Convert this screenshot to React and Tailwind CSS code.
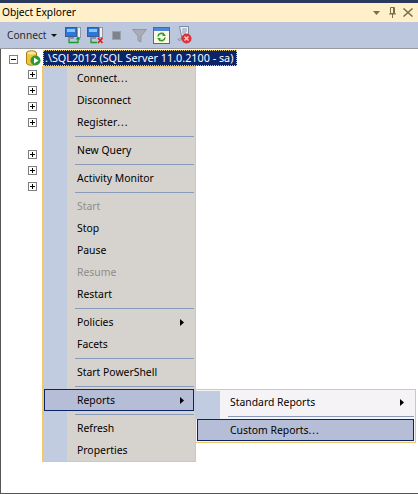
function Plus() {
  return (
    <div className="w-[9px] h-[9px] border border-[#808080] bg-white relative">
      <div className="absolute left-[1px] top-[3px] w-[5px] h-[1px] bg-black" />
      <div className="absolute left-[3px] top-[1px] w-[1px] h-[5px] bg-black" />
    </div>
  );
}
function Minus() {
  return (
    <div className="w-[9px] h-[9px] mt-[5px] border border-[#808080] bg-white relative shrink-0">
      <div className="absolute left-[1px] top-[3px] w-[5px] h-[1px] bg-black" />
    </div>
  );
}
function Arrow() {
  return <svg width="4" height="7" viewBox="0 0 4 7"><path d="M0 0 L4 3.5 L0 7Z" fill="#000" /></svg>;
}
function Label({ text }) {
  const dots = text.endsWith("...");
  return (
    <span className="pt-[1px]">
      {dots ? text.slice(0, -3) : text}
      {dots ? <span className="tracking-[1px]">...</span> : null}
    </span>
  );
}
function Item({ label, arrow, disabled }) {
  return (
    <div className="h-[22px] flex items-center">
      <div className="w-[24px] h-full bg-[#c1cce1] shrink-0" />
      <div className={"flex-1 h-full flex items-center pl-[10px] pr-[11px] justify-between " + (disabled ? "text-[#8d8d8d]" : "text-black")}>
        <Label text={label} />
        {arrow ? <Arrow /> : null}
      </div>
    </div>
  );
}
function Sep() {
  return (
    <div className="h-[6px] flex">
      <div className="w-[24px] h-full bg-[#c1cce1] shrink-0" />
      <div className="flex-1 pl-[8px] pr-[1px] flex items-center"><div className="w-full h-[1px] bg-[#8a9ab9]" /></div>
    </div>
  );
}
function Computer({ children }) {
  return (
    <svg width="17" height="17" viewBox="0 0 17 17">
      <rect x="0.5" y="0.5" width="11" height="9" fill="#2a78dc" stroke="#3a5c94" />
      <rect x="2" y="2" width="8" height="3" fill="#8cc4f6" />
      <rect x="3" y="10" width="6" height="2" fill="#8a93a6" />
      <rect x="12.5" y="0.5" width="3" height="10" fill="#eceff5" stroke="#9098a8" />
      {children}
    </svg>
  );
}
function Toolbar() {
  return (
    <div className="h-[26px] bg-[#bcc7dd] flex items-center pl-[7px] shrink-0">
      <span className="text-[#2a2a2a] text-[10.2px] pt-[1px]">Connect</span>
      <svg className="ml-[4px]" width="6" height="3" viewBox="0 0 6 3"><path d="M0 0H6L3 3Z" fill="#111" /></svg>
      <div className="ml-[8px] flex"><Computer>
        <path d="M4 12V15.5H13V12" stroke="#1c9a2a" strokeWidth="1.3" fill="none" />
        <path d="M13 9.5L15.5 12.5H10.5Z" fill="#1c9a2a" />
      </Computer></div>
      <div className="ml-[5px] flex"><Computer>
        <path d="M4 12V15.5H10" stroke="#1c9a2a" strokeWidth="1.3" fill="none" />
        <path d="M11 11L15.5 16M15.5 11L11 16" stroke="#e01a1a" strokeWidth="1.7" />
      </Computer></div>
      <div className="ml-[8px] w-[9px] h-[9px] bg-[#7f838c] border border-[#9ca1ae]" />
      <svg className="ml-[11px]" width="15" height="15" viewBox="0 0 15 15">
        <path d="M0.5 1.5H14.5L9 8V14L6 12.5V8Z" fill="#a8acb4" stroke="#9296a0" />
      </svg>
      <svg className="ml-[6px]" width="17" height="17" viewBox="0 0 17 17">
        <rect x="0.5" y="0.5" width="16" height="16" fill="#fbf8e4" stroke="#3d6bb5" />
        <rect x="1" y="1" width="15" height="3" fill="#4f86d8" />
        <path d="M5 9.5A3.5 3.5 0 0 1 11 7.5M12 10.5A3.5 3.5 0 0 1 6 12.5" stroke="#2f9c2a" strokeWidth="1.6" fill="none" />
        <path d="M10 5.5L13 9H9.5Z M7 14.5L4 11H7.5Z" fill="#2f9c2a" />
      </svg>
      <svg className="ml-[7px]" width="15" height="18" viewBox="0 0 15 18">
        <path d="M2.5 0.5H11.5V10H4.5Z" fill="#eef1f6" stroke="#7d8aa3" />
        <path d="M4.5 10V13C4 15 1 15 1 13H4" stroke="#7d8aa3" fill="#eef1f6" />
        <path d="M5 3H10M5 5H10M5 7H9" stroke="#8797b5" />
        <circle cx="9.5" cy="12.5" r="5" fill="#d8343a" />
        <path d="M7.5 10.5L11.5 14.5M11.5 10.5L7.5 14.5" stroke="#f7d8d8" strokeWidth="1.4" />
      </svg>
    </div>
  );
}
export default function App() {
  const items = [
    ["Connect..."], ["Disconnect"], ["Register..."], 0, ["New Query"], 0, ["Activity Monitor"], 0,
    ["Start", false, true], ["Stop"], ["Pause"], ["Resume", false, true], ["Restart"], 0,
    ["Policies", true], ["Facets"], 0, ["Start PowerShell"], 0,
  ];
  return (
    <div className="w-[418px] h-[494px] bg-[#2b3a5a] pt-[3px] flex flex-col text-[10.4px] relative overflow-hidden" style={{ fontFamily: '"Noto Sans", sans-serif' }}>
      <div className="h-[19px] bg-[#fff0c9] flex items-center justify-between pl-[2px] pr-[5px] shrink-0">
        <span className="text-black text-[10.2px] pt-[1px]">Object Explorer</span>
        <div className="flex items-center">
          <svg width="7" height="4" viewBox="0 0 7 4"><path d="M0 0H7L3.5 4Z" fill="#7a6e48" /></svg>
          <svg className="ml-[9px]" width="7" height="11" viewBox="0 0 7 11"><path d="M1.5 0.5H5.5V6.5H1.5ZM0 7H7M3.5 7V11M4.5 1V6" stroke="#7a6e48" fill="none" /></svg>
          <svg className="ml-[7px]" width="10" height="9" viewBox="0 0 10 9"><path d="M0.5 0.5L9.5 8.5M9.5 0.5L0.5 8.5" stroke="#7a6e48" strokeWidth="1.5" /></svg>
        </div>
      </div>
      <Toolbar />
      <div className="h-[1px] bg-[#9a9aa0] shrink-0" />
      <div className="flex-1 bg-white border-l border-b border-[#555] relative">
        <div className="h-[16px] flex items-start pl-[8px] mt-[1px]">
          <Minus />
          <svg className="ml-[8px] shrink-0" width="15" height="16" viewBox="0 0 15 16">
            <path d="M0.5 3C0.5 0 10.5 0 10.5 3V13C10.5 16 0.5 16 0.5 13Z" fill="#efc53c" stroke="#a9821c" />
            <ellipse cx="5.5" cy="3" rx="4" ry="1.6" fill="#fae59a" />
            <circle cx="9.5" cy="10.5" r="5" fill="#2f9a35" />
            <path d="M8 7.5L12.5 10.5L8 13.5Z" fill="#fff" />
          </svg>
          <span className="ml-[2px] h-[16px] flex items-center pl-[2px] w-[194px] bg-[#0a246a] text-white text-[10.8px] outline-1 -outline-offset-1 outline-dotted outline-[#e8c860] whitespace-nowrap">.\SQL2012 (SQL Server 11.0.2100 - sa)</span>
        </div>
        <div className="flex flex-col pl-[27px]">
          {[0, 1, 2, 3].map((i) => <div key={i} className="h-[16px] flex items-center"><Plus /></div>)}
          <div className="h-[16px]" />
          {[4, 5, 6].map((i) => <div key={i} className="h-[16px] flex items-center"><Plus /></div>)}
        </div>
      </div>
      <div className="absolute left-[195px] top-[389px] w-[221px] border border-[#f0c767] bg-[#f6f3f7] py-[1px]">
        <div className="h-[22px] flex">
          <div className="w-[24px] bg-[#c1cce1] shrink-0" />
          <div className="flex-1 flex items-center justify-between pl-[10px] pr-[11px]"><Label text="Standard Reports" /><Arrow /></div>
        </div>
        <div className="h-[6px] flex">
          <div className="w-[24px] bg-[#c1cce1] shrink-0" />
          <div className="flex-1 pl-[8px] pr-[1px] flex items-center"><div className="w-full h-[1px] bg-[#8a9ab9]" /></div>
        </div>
        <div className="h-[22px] border border-[#0a246a] bg-[#b6bdd6] flex items-center pl-[32px] ml-[1px] mr-[1px]">
          <Label text="Custom Reports..." />
        </div>
      </div>
      <div className="absolute left-[42px] top-[66px] w-[154px] border border-[#f0c767] bg-[#d6d3ce]">
        {items.map((it, i) => it === 0 ? <Sep key={i} /> : <Item key={i} label={it[0]} arrow={it[1]} disabled={it[2]} />)}
        <div className="h-[22px] bg-[#c1cce1]">
          <div className="h-full border border-[#0a246a] bg-[#b6bdd6] flex items-center pl-[32px] pr-[9px] justify-between ml-[1px] mr-[1px] text-black">
            <Label text="Reports" /><Arrow />
          </div>
        </div>
        <Sep />
        <Item label="Refresh" />
        <Item label="Properties" />
      </div>
    </div>
  );
}
